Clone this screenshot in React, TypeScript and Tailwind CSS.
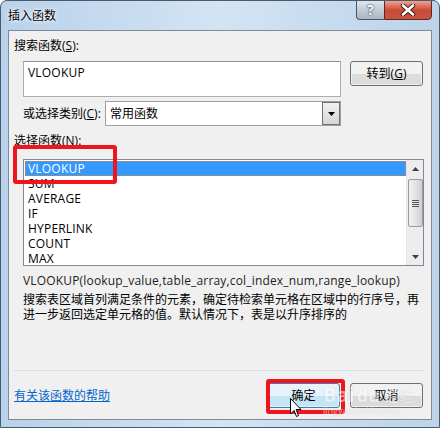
import React from "react";

const FONT = { fontFamily: '"Open Sans", "Noto Sans CJK SC", sans-serif' };

function Btn({ label, u, hot, w }: { label: string; u?: string; hot?: boolean; w: string }) {
  return (
    <div
      className={`${w} h-[25px] rounded-[3px] border flex items-center justify-center text-[12px] text-black relative overflow-hidden ${
        hot ? "border-[#3c7fb1]" : "border-[#707070]"
      }`}
    >
      <div className="absolute inset-[1px] rounded-[2px] flex flex-col">
        <div className={`flex-1 ${hot ? "bg-[#e5f4fc]" : "bg-[#f2f2f2]"}`} />
        <div className={`flex-1 ${hot ? "bg-[#c4e5f6]" : "bg-[#dcdcdc]"}`} />
      </div>
      <span className="relative leading-[15px]">
        {label}
        {u && (
          <>
            (<span className="underline">{u}</span>)
          </>
        )}
      </span>
    </div>
  );
}

const items = ["VLOOKUP", "SUM", "AVERAGE", "IF", "HYPERLINK", "COUNT", "MAX"];

export default function App() {
  return (
    <div
      className="w-[440px] h-[428px] relative overflow-hidden rounded-t-[7px] border border-[#4a5a6c] bg-gradient-to-r from-[#b9d1ea] via-[#d3e4f4] to-[#bcd3ea]"
      style={FONT}
    >
      {/* title bar */}
      <div className="h-[29px] flex items-start">
        <div className="pl-[7px] pt-[7px] text-[12px] leading-[15px] text-black [text-shadow:0_0_6px_#ffffff,0_0_3px_#ffffff]">
          插入函数
        </div>
        <div className="ml-auto mr-[7px] flex -mt-px">
          <div className="w-[28px] h-[20px] border border-[#475466] border-r-0 rounded-bl-[4px] bg-gradient-to-b from-[#dfe5ec] via-[#c3ccd6] to-[#aab6c4] flex items-center justify-center">
            <span className="text-white font-bold text-[14px] leading-none [text-shadow:0_0_2px_#2e3d50,0_0_1px_#2e3d50]">?</span>
          </div>
          <div className="w-[48px] h-[20px] border border-[#5a2a22] rounded-br-[4px] bg-gradient-to-b from-[#e8a493] via-[#cc4b35] to-[#c9533e] flex items-center justify-center">
            <svg width="16" height="12" viewBox="0 0 16 12">
              <path d="M3 1.5 L13 10.5 M13 1.5 L3 10.5" stroke="#3a1a14" strokeWidth="4.5" strokeLinecap="round" />
              <path d="M3 1.5 L13 10.5 M13 1.5 L3 10.5" stroke="#ffffff" strokeWidth="2.6" strokeLinecap="round" />
            </svg>
          </div>
        </div>
      </div>

      {/* client area */}
      <div className="mx-[7px] h-[390px] border border-[#7d8a98] bg-[#f0f0f0] flex flex-col pl-[5px] pr-[7px] text-[12px] text-black">
        <div className="mt-[7px] h-[15px] leading-[15px]">
          搜索函数(<span className="underline">S</span>):
        </div>
        <div className="mt-[8px] flex pl-[9px] items-start">
          <div className="w-[318px] h-[36px] border border-[#abadb3] border-t-[#8e9299] bg-white pl-[4px] pt-[3px] leading-[15px] tracking-[0.2px]">
            VLOOKUP
          </div>
          <div className="ml-[9px]">
            <Btn label="转到" u="G" w="w-[73px]" />
          </div>
        </div>
        <div className="mt-[4px] flex items-center pl-[9px]">
          <div className="w-[82px] leading-[15px]">
            或选择类别(<span className="underline">C</span>):
          </div>
          <div className="w-[236px] h-[25px] border border-[#a0a0a0] bg-white flex items-center">
            <div className="flex-1 pl-[4px] leading-[15px]">常用函数</div>
            <div className="w-[18px] h-[23px] border border-[#707070] bg-gradient-to-b from-[#f2f2f2] to-[#d6d6d6] flex items-center justify-center">
              <svg width="7" height="4" viewBox="0 0 7 4">
                <path d="M0 0 H7 L3.5 4 Z" fill="#000" />
              </svg>
            </div>
          </div>
        </div>
        <div className="mt-[7px] h-[15px] leading-[15px]">
          选择函数(<span className="underline">N</span>):
        </div>
        <div className="mt-[11px] ml-[9px] w-[401px] h-[107px] border border-[#828790] bg-white flex overflow-hidden">
          <div className="flex-1 pt-px pl-px overflow-hidden">
            {items.map((it, i) => (
              <div
                key={it}
                className={`h-[15px] leading-[13px] pl-[2px] tracking-[0.2px] ${
                  i === 0 ? "bg-[#3399ff] text-white border border-dotted border-[#d9822b]" : "border border-transparent"
                }`}
              >
                {it}
              </div>
            ))}
          </div>
          <div className="w-[17px] bg-[#ededed] border-l border-[#e6e6e6] flex flex-col items-center">
            <div className="h-[17px] flex items-center justify-center">
              <svg width="7" height="4" viewBox="0 0 7 4">
                <path d="M0 4 H7 L3.5 0 Z" fill="#404040" />
              </svg>
            </div>
            <div className="mt-[2px] w-[15px] h-[48px] rounded-[2px] border border-[#9b9b9b] bg-gradient-to-r from-[#f1f1f1] via-[#e4e4e4] to-[#cfcfcf] flex flex-col items-center justify-center gap-[1px]">
              {[0, 1, 2, 3].map((k) => (
                <div key={k} className="w-[7px] h-px bg-[#555]" />
              ))}
            </div>
            <div className="mt-auto h-[17px] flex items-center justify-center">
              <svg width="7" height="4" viewBox="0 0 7 4">
                <path d="M0 0 H7 L3.5 4 Z" fill="#404040" />
              </svg>
            </div>
          </div>
        </div>
        <div className="mt-[7px] pl-[9px] h-[15px] leading-[15px] text-[#1e1e1e] tracking-[0.17px]">
          VLOOKUP(lookup_value,table_array,col_index_num,range_lookup)
        </div>
        <div className="mt-[4px] pl-[9px] leading-[15px] w-[420px]">
          <div>搜索表区域首列满足条件的元素，确定待检索单元格在区域中的行序号，再</div>
          <div>进一步返回选定单元格的值。默认情况下，表是以升序排序的</div>
        </div>
        <div className="mt-[48px] h-px bg-[#d5dfe5]" />
        <div className="mt-[12px] flex items-center h-[25px]">
          <span className="text-[#0066cc] underline leading-[15px]">有关该函数的帮助</span>
          <div className="ml-auto flex gap-[10px] mr-[1px]">
            <Btn label="确定" hot w="w-[73px]" />
            <Btn label="取消" w="w-[73px]" />
          </div>
        </div>
      </div>

      {/* annotations */}
      <div className="absolute left-[12px] top-[144px] w-[104px] h-[39px] border-[4px] border-[#f0141e] rounded-[3px]" />
      <div className="absolute left-[265px] top-[378px] w-[79px] h-[35px] border-[4px] border-[#f0141e] rounded-[3px]" />

      {/* watermark */}
      <div className="absolute left-[322px] top-[384px] flex items-end gap-[2px] opacity-50 text-white [text-shadow:0_0_1px_#999]">
        <span className="text-[20px] leading-[20px] font-bold">Bai</span>
        <span className="text-[18px] leading-[20px] font-bold">du</span>
        <span className="text-[15px] leading-[18px] ml-[2px]">经验</span>
      </div>
      <div className="absolute left-[322px] top-[405px] text-[9px] leading-[10px] text-white opacity-50 [text-shadow:0_0_1px_#999]">
        jingyan.baidu.com
      </div>

      {/* cursor */}
      <svg className="absolute left-[289px] top-[397px]" width="12" height="20" viewBox="0 0 12 20">
        <path d="M0.5 0.5 V16 L4 12.5 L6.5 18.5 L8.5 17.5 L6 11.5 H11 Z" fill="#fff" stroke="#000" strokeWidth="1" />
      </svg>
    </div>
  );
}
